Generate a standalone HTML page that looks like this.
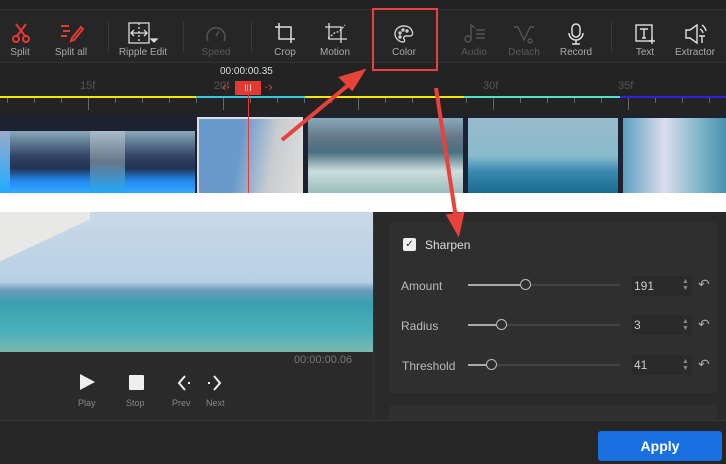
<!DOCTYPE html><html><head><style>
*{margin:0;padding:0;box-sizing:border-box}
body{width:726px;height:464px;overflow:hidden;background:#262626;font-family:"Liberation Sans",sans-serif;position:relative}
.a{position:absolute}
.lbl{position:absolute;top:47px;font-size:10px;color:#aaa;transform:translateX(-50%);white-space:nowrap}
.dim{color:#5a5a5a}
.sep{position:absolute;top:22px;width:1px;height:30px;background:#3a3a3a}
svg{position:absolute;overflow:visible}
.tk{position:absolute;top:98px;width:1px;height:5px;background:#666}
.tl{position:absolute;top:80px;font-size:11px;color:#555}
.pl{position:absolute;font-size:12px;color:#bbb}
.tr{position:absolute;height:2px;background:#444}
.tf{position:absolute;height:2px;background:#aaa}
.kn{position:absolute;width:11px;height:11px;border:1.5px solid #bbb;border-radius:50%;background:#2f2f2f}
.num{position:absolute;width:60px;height:20px;background:#2a2a2a;font-size:12px;color:#ccc;padding:3px 2px}
.ud{position:absolute;font-size:7px;color:#888;line-height:7px}
.rs{position:absolute;font-size:14px;color:#aaa}
</style></head><body>
<div class="a" style="left:0;top:0;width:726px;height:10px;background:#222;border-bottom:1px solid #333"></div>
<div class="a" style="left:0;top:62px;width:726px;height:53px;background:#232323;border-top:1px solid #333"></div>
<!-- icons -->
<svg style="left:10px;top:22px" width="22" height="22" viewBox="0 0 22 22" fill="none" stroke="#e53935" stroke-width="2"><circle cx="6" cy="17" r="3"/><circle cx="16" cy="17" r="3"/><path d="M7 14L16 2M15 14L6 2"/></svg>
<svg style="left:60px;top:24px" width="24" height="18" viewBox="0 0 24 18" fill="none" stroke="#e53935" stroke-width="2"><path d="M1 2h8M3 7h7M1 12h6M12 14l9-11 2 2-9 11-3 1z"/></svg>
<svg style="left:128px;top:22px" width="30" height="22" viewBox="0 0 30 22" fill="none" stroke="#ddd" stroke-width="1.3"><rect x="1" y="1" width="20" height="20"/><path d="M11 1v20" stroke-dasharray="2 2"/><path d="M4 11h14M6 8l-3 3 3 3M16 8l3 3-3 3"/><path d="M23 17h6l-3 3z" fill="#ddd"/></svg>
<svg style="left:205px;top:23px" width="22" height="20" viewBox="0 0 22 20" fill="none" stroke="#555" stroke-width="1.5"><path d="M3 18A9 9 0 1 1 19 18"/><path d="M11 13l3-5"/></svg>
<svg style="left:275px;top:23px" width="20" height="20" viewBox="0 0 20 20" fill="none" stroke="#ddd" stroke-width="1.5"><path d="M4 0v16h16M0 4h16v16"/></svg>
<svg style="left:325px;top:23px" width="22" height="20" viewBox="0 0 22 20" fill="none" stroke="#ddd" stroke-width="1.3"><path d="M4 0v16h18M0 4h16v16"/><path d="M3 15c4-2 6-6 9-6s5-4 8-7" stroke-dasharray="2 1.5"/></svg>
<svg style="left:394px;top:25px" width="20" height="18" viewBox="0 0 20 18" fill="none" stroke="#ccc" stroke-width="1.4"><path d="M10 1C4 1 1 5 1 9s4 8 8 8c2 0 2-2 1-3s0-3 2-3h4c3 0 3-3 2-5C17 3 14 1 10 1z"/><circle cx="6" cy="8" r="1" fill="#ccc"/><circle cx="9" cy="5" r="1" fill="#ccc"/><circle cx="13" cy="6" r="1" fill="#ccc"/><circle cx="6" cy="12" r="1" fill="#ccc"/></svg>
<svg style="left:464px;top:24px" width="22" height="20" viewBox="0 0 22 20" fill="none" stroke="#555" stroke-width="1.4"><circle cx="4" cy="15" r="3"/><path d="M7 15V1l4 3M12 6h9M12 10h9M12 14h9"/></svg>
<svg style="left:513px;top:24px" width="22" height="20" viewBox="0 0 22 20" fill="none" stroke="#555" stroke-width="1.4"><path d="M1 3h4l6 13 6-13h4"/><circle cx="17" cy="17" r="2"/></svg>
<svg style="left:568px;top:23px" width="16" height="22" viewBox="0 0 16 22" fill="none" stroke="#ddd" stroke-width="1.5"><rect x="4" y="1" width="8" height="13" rx="4"/><path d="M1 10a7 7 0 0 0 14 0M8 17v4M4 21h8"/></svg>
<svg style="left:635px;top:24px" width="22" height="20" viewBox="0 0 22 20" fill="none" stroke="#ddd" stroke-width="1.4"><rect x="1" y="1" width="16" height="16"/><path d="M5 5h8M9 5v9M7 14h4M17 14v6M14 17h6"/></svg>
<svg style="left:685px;top:24px" width="22" height="20" viewBox="0 0 22 20" fill="none" stroke="#ddd" stroke-width="1.4"><path d="M1 6h4l7-5v18l-7-5H1z"/><path d="M15 5a6 6 0 0 1 3 4M17 1a10 10 0 0 1 4 6M14 12h6M17 12v7"/></svg>
<div class="lbl" style="left:20px">Split</div>
<div class="lbl" style="left:71px">Split all</div>
<div class="lbl" style="left:143px">Ripple Edit</div>
<div class="lbl dim" style="left:216px">Speed</div>
<div class="lbl" style="left:285px">Crop</div>
<div class="lbl" style="left:335px">Motion</div>
<div class="lbl" style="left:404px">Color</div>
<div class="lbl dim" style="left:474px">Audio</div>
<div class="lbl dim" style="left:524px">Detach</div>
<div class="lbl" style="left:576px">Record</div>
<div class="lbl" style="left:645px">Text</div>
<div class="lbl" style="left:695px">Extractor</div>
<div class="sep" style="left:108px"></div><div class="sep" style="left:183px"></div><div class="sep" style="left:251px"></div><div class="sep" style="left:611px"></div>
<div class="a" style="left:372px;top:8px;width:66px;height:63px;border:2px solid #e8423a"></div>
<!-- ruler -->
<div class="tl" style="left:80px">15f</div><div class="tl" style="left:214px">20f</div><div class="tl" style="left:483px">30f</div><div class="tl" style="left:618px">35f</div>
<div class="a" style="left:0;top:96px;width:196px;height:2px;background:#ffe600"></div>
<div class="a" style="left:196px;top:96px;width:109px;height:2px;background:#37c8e0"></div>
<div class="a" style="left:305px;top:96px;width:159px;height:2px;background:#ffe600"></div>
<div class="a" style="left:464px;top:96px;width:156px;height:2px;background:#4fe0c8"></div>
<div class="a" style="left:620px;top:96px;width:106px;height:2px;background:#3020e0"></div>
<div class="tk" style="left:7px"></div><div class="tk" style="left:34px"></div><div class="tk" style="left:61px"></div><div class="tk" style="left:88px;height:12px"></div><div class="tk" style="left:115px"></div><div class="tk" style="left:142px"></div><div class="tk" style="left:169px"></div><div class="tk" style="left:196px"></div><div class="tk" style="left:223px;height:12px"></div><div class="tk" style="left:250px"></div><div class="tk" style="left:277px"></div><div class="tk" style="left:304px"></div><div class="tk" style="left:331px"></div><div class="tk" style="left:358px;height:12px"></div><div class="tk" style="left:385px"></div><div class="tk" style="left:412px"></div><div class="tk" style="left:439px"></div><div class="tk" style="left:466px"></div><div class="tk" style="left:493px;height:12px"></div><div class="tk" style="left:520px"></div><div class="tk" style="left:547px"></div><div class="tk" style="left:574px"></div><div class="tk" style="left:601px"></div><div class="tk" style="left:628px;height:12px"></div><div class="tk" style="left:655px"></div><div class="tk" style="left:682px"></div><div class="tk" style="left:709px"></div>
<div class="a" style="left:220px;top:66px;font-size:10px;color:#ddd">00:00:00.35</div>
<div class="a" style="left:235px;top:81px;width:26px;height:14px;background:#e53935;color:#fff;font-size:9px;text-align:center;line-height:14px">III</div>
<div class="a" style="left:222px;top:79px;color:#e53935;font-size:13px">‹·</div><div class="a" style="left:264px;top:79px;color:#e53935;font-size:13px">·›</div>
<!-- thumbs -->
<div class="a" style="left:0;top:115px;width:726px;height:80px;background:#1e2230"></div>
<div class="a" style="left:0;top:131px;width:10px;height:62px;background:linear-gradient(#9ac,#2af)"></div>
<div class="a" style="left:10px;top:131px;width:80px;height:62px;background:linear-gradient(#8ab 0%,#346 40%,#235 60%,#28e 80%,#3af)"></div>
<div class="a" style="left:90px;top:131px;width:35px;height:62px;background:linear-gradient(#abc,#678 50%,#2af)"></div>
<div class="a" style="left:125px;top:131px;width:70px;height:62px;background:linear-gradient(#8ab 0%,#346 40%,#235 60%,#28e 80%,#3af)"></div>
<div class="a" style="left:197px;top:117px;width:106px;height:78px;border:2px solid #ddd;background:linear-gradient(100deg,#6a9acc 40%,#c8ccd0 70%,#ddd)"></div>
<div class="a" style="left:308px;top:118px;width:155px;height:76px;background:linear-gradient(#8ab 0%,#678 25%,#4a7080 45%,#cdd 70%,#9bb)"></div>
<div class="a" style="left:468px;top:118px;width:150px;height:76px;background:linear-gradient(#9bc 0%,#8bc 50%,#3a8ab0 70%,#1a6a90)"></div>
<div class="a" style="left:623px;top:118px;width:103px;height:76px;background:linear-gradient(90deg,#5aa0c0,#dde 40%,#8bc 70%,#4a90b0)"></div>
<div class="a" style="left:248px;top:82px;width:1px;height:113px;background:#e53935"></div>
<div class="a" style="left:0;top:193px;width:726px;height:19px;background:#fff"></div>
<!-- preview -->
<div class="a" style="left:0;top:212px;width:373px;height:208px;background:#2a2a2a"></div>
<div class="a" style="left:0;top:212px;width:373px;height:140px;background:linear-gradient(#c9d9e6 0%,#b8d0e6 50%,#6a9ab8 56%,#3aa0b0 65%,#4ab0b8 85%,#7ab8b0)"></div>
<div class="a" style="left:0;top:212px;width:90px;height:80px;background:linear-gradient(155deg,#e8e8e6 40%,transparent 41%)"></div>
<div class="a" style="left:294px;top:354px;font-size:11px;color:#777">00:00:00.06</div>
<svg style="left:80px;top:374px" width="15" height="16" viewBox="0 0 15 16"><path d="M0 0L15 8 0 16z" fill="#eee"/></svg>
<div class="a" style="left:129px;top:375px;width:15px;height:15px;background:#eee;border-radius:1px"></div>
<svg style="left:178px;top:375px" width="44" height="16" viewBox="0 0 44 16" fill="none" stroke="#eee" stroke-width="2"><path d="M7 1L1 8l6 7M36 1l6 7-6 7"/><rect x="10" y="7" width="2" height="2" fill="#eee" stroke="none"/><rect x="30" y="7" width="2" height="2" fill="#eee" stroke="none"/></svg>
<div class="a" style="left:78px;top:398px;font-size:9px;color:#888">Play</div>
<div class="a" style="left:126px;top:398px;font-size:9px;color:#888">Stop</div>
<div class="a" style="left:172px;top:398px;font-size:9px;color:#888">Prev</div>
<div class="a" style="left:206px;top:398px;font-size:9px;color:#888">Next</div>
<!-- panel -->
<div class="a" style="left:373px;top:212px;width:353px;height:208px;background:#2a2a2a;border-left:1px solid #333"></div>
<div class="a" style="left:389px;top:222px;width:328px;height:171px;background:#2f2f2f;border-radius:3px"></div>
<div class="a" style="left:389px;top:405px;width:328px;height:20px;background:#2f2f2f;border-radius:3px"></div>
<div class="a" style="left:403px;top:238px;width:13px;height:13px;background:#eee;border-radius:2px;color:#222;font-size:10px;text-align:center;line-height:13px">✓</div>
<div class="pl" style="left:425px;top:238px;color:#ddd">Sharpen</div>
<div class="pl" style="left:401px;top:279px">Amount</div>
<div class="pl" style="left:401px;top:319px">Radius</div>
<div class="pl" style="left:402px;top:359px">Threshold</div>
<div class="tr" style="left:468px;top:284px;width:152px"></div><div class="tf" style="left:468px;top:284px;width:52px"></div><div class="kn" style="left:520px;top:279px"></div>
<div class="tr" style="left:468px;top:324px;width:152px"></div><div class="tf" style="left:468px;top:324px;width:28px"></div><div class="kn" style="left:496px;top:319px"></div>
<div class="tr" style="left:468px;top:364px;width:152px"></div><div class="tf" style="left:468px;top:364px;width:18px"></div><div class="kn" style="left:486px;top:359px"></div>
<div class="num" style="left:632px;top:276px">191</div><div class="num" style="left:632px;top:315px">3</div><div class="num" style="left:632px;top:355px">41</div>
<div class="ud" style="left:682px;top:278px">▲<br>▼</div><div class="ud" style="left:682px;top:318px">▲<br>▼</div><div class="ud" style="left:682px;top:358px">▲<br>▼</div>
<div class="rs" style="left:698px;top:276px">↶</div><div class="rs" style="left:698px;top:316px">↶</div><div class="rs" style="left:698px;top:356px">↶</div>
<!-- bottom -->
<div class="a" style="left:0;top:420px;width:726px;height:44px;background:#262626;border-top:1px solid #3a3a3a"></div>
<div class="a" style="left:598px;top:431px;width:124px;height:30px;background:#1a6fe0;border-radius:3px;color:#fff;font-weight:bold;font-size:14px;text-align:center;line-height:30px">Apply</div>
<!-- arrows -->
<svg style="left:0;top:0" width="726" height="464"><g stroke="#e8423a" stroke-width="4" fill="#e8423a"><path d="M282 140L352 82" /><path d="M362 72l-20 6 10 10z"/><path d="M436 88L456 218"/><path d="M458 232l-9-16 13-2z"/></g></svg>
</body></html>
